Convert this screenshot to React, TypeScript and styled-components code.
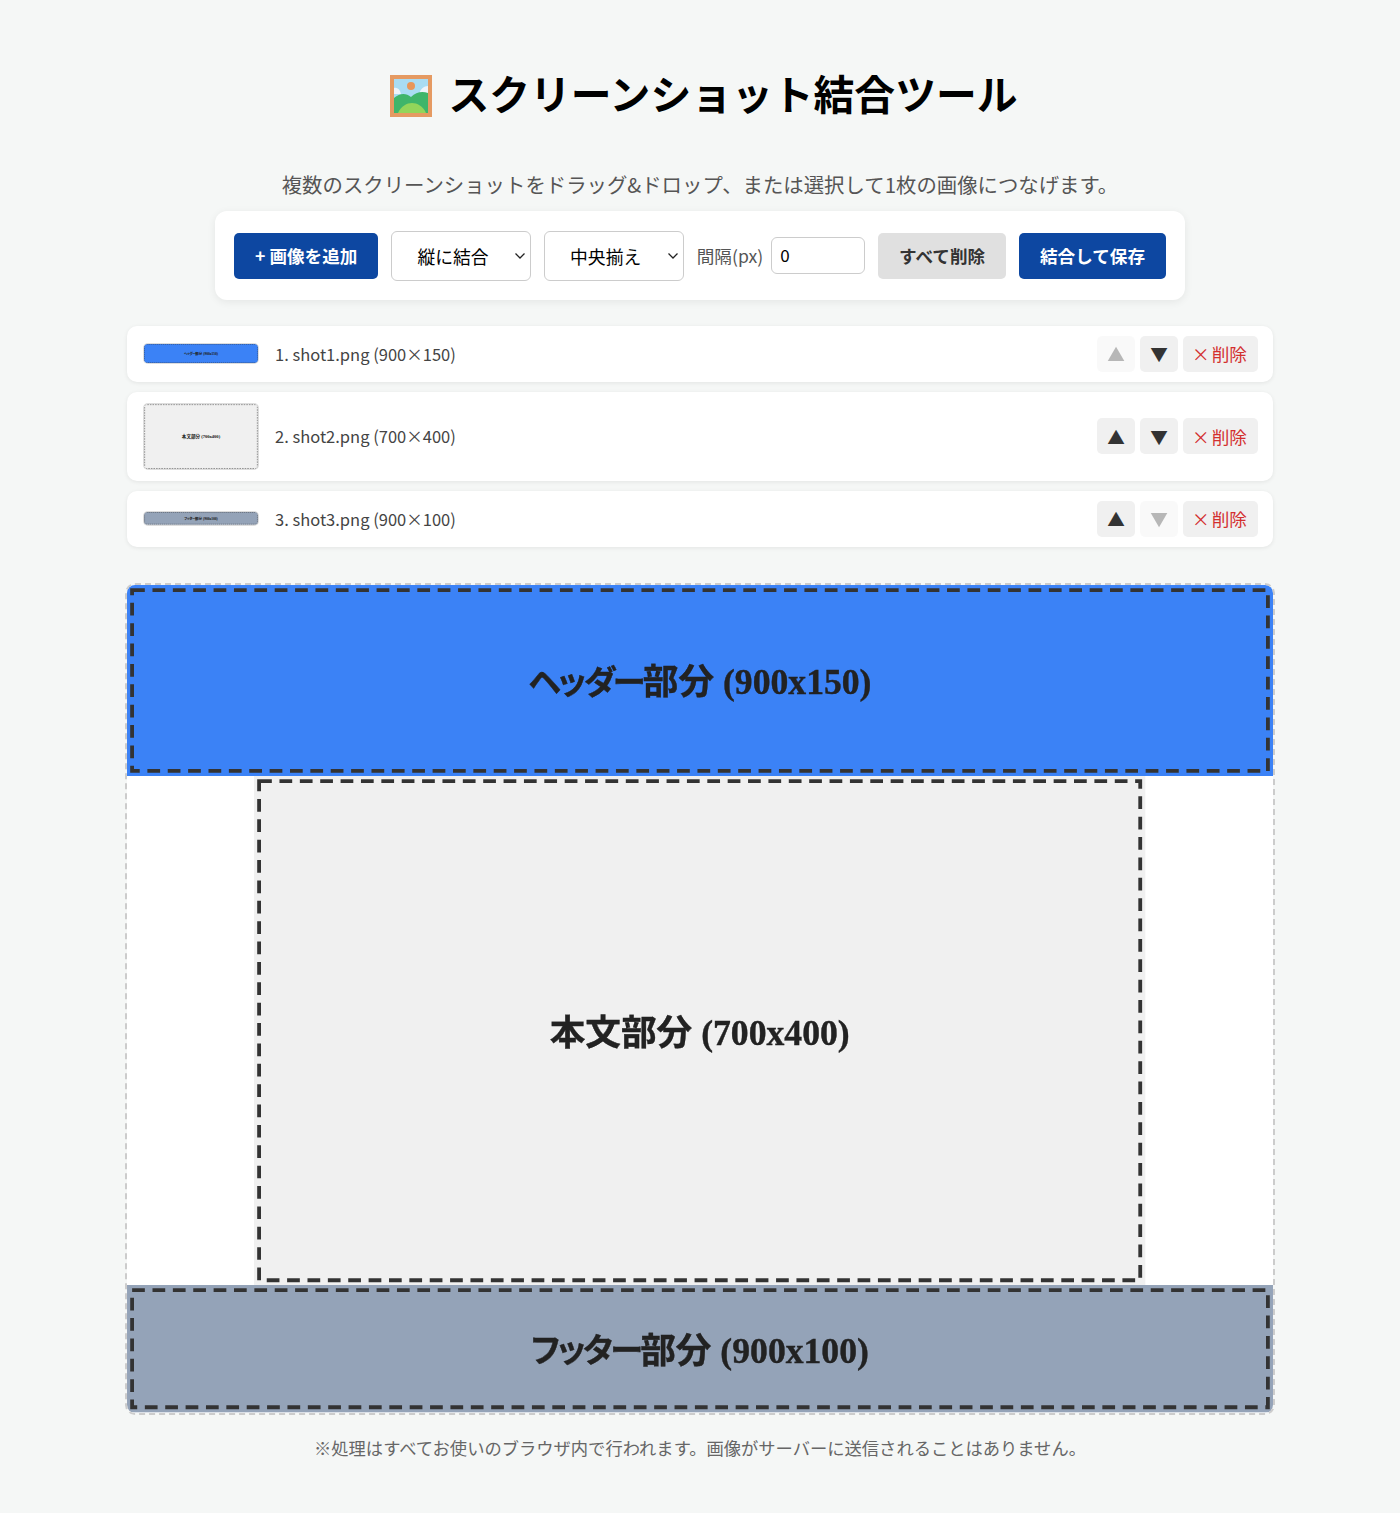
import React from 'react';
import styled, { createGlobalStyle } from 'styled-components';

const GlobalStyle = createGlobalStyle`
    body {
        margin: 0;
        background: #f5f7f6;
        font-family: 'Noto Sans CJK JP', 'Noto Sans', sans-serif;
        color: #333;
    }
`;

const Page = styled.div`
    width: 1146px;
    margin: 0 auto;
    padding-top: 64px;
    display: flex;
    flex-direction: column;
    align-items: center;
`;

const Title = styled.h1`
    margin: 0;
    height: 58px;
    display: flex;
    align-items: center;
    gap: 16px;
    font-size: 40.8px;
    font-weight: 700;
    line-height: 58px;
    color: #000;
    padding-left: 8px;
`;

const EmojiSvg = styled.svg`
    margin-top: 6px;
`;

const Subtitle = styled.p`
    margin: 47px 0 0;
    font-size: 20.4px;
    line-height: 30px;
    color: #555;
`;

const Toolbar = styled.div`
    margin-top: 12px;
    width: 970px;
    height: 89px;
    box-sizing: border-box;
    padding: 0 19px;
    display: flex;
    align-items: center;
    gap: 13px;
    background: #fff;
    border-radius: 12px;
    box-shadow: 0 2px 8px rgba(0, 0, 0, 0.07);
`;

const ToolButton = styled.button<{ $primary?: boolean; $width: number }>`
    width: ${(p) => p.$width}px;
    height: 46px;
    padding: 0;
    border: none;
    border-radius: 5px;
    font-family: inherit;
    font-size: 17.6px;
    font-weight: 700;
    background: ${(p) => (p.$primary ? '#0d47a1' : '#e0e0e0')};
    color: ${(p) => (p.$primary ? '#fff' : '#333')};
`;

const Select = styled.select`
    appearance: none;
    width: 139.75px;
    height: 50px;
    padding: 0 0 0 25px;
    border: 1px solid #ccc;
    border-radius: 6px;
    background: #fff url("data:image/svg+xml,%3Csvg xmlns='http://www.w3.org/2000/svg' width='12' height='8' viewBox='0 0 12 8'%3E%3Cpath d='M1.5 1.5 6 6l4.5-4.5' fill='none' stroke='%23222' stroke-width='1.3'/%3E%3C/svg%3E") no-repeat right 4px center;
    font-family: inherit;
    font-size: 17.8px;
    color: #000;
`;

const GapLabel = styled.label`
    display: flex;
    align-items: center;
    gap: 8px;
    font-size: 17.6px;
    color: #555;
    white-space: nowrap;
`;

const GapInput = styled.input`
    width: 94px;
    height: 37px;
    box-sizing: border-box;
    padding: 0 8px 2px;
    border: 1px solid #ccc;
    border-radius: 6px;
    font-family: inherit;
    font-size: 17px;
    color: #000;
`;

const FileList = styled.ul`
    list-style: none;
    margin: 25.6px 0 0;
    padding: 0;
    width: 100%;
    display: flex;
    flex-direction: column;
    gap: 10px;
`;

const FileRow = styled.li`
    display: flex;
    align-items: center;
    gap: 17px;
    min-height: 56px;
    box-sizing: border-box;
    padding: 10px 15px 10px 17px;
    background: #fff;
    border-radius: 10px;
    box-shadow: 0 1px 4px rgba(0, 0, 0, 0.08);
`;

const Thumb = styled.div`
    flex: none;
    width: 114px;
    margin: 2px 0;
    display: flex;
    justify-content: center;
    border-radius: 4px;
    overflow: hidden;
    box-shadow: 0 0 0 1px #ddd;
`;

const FileName = styled.span`
    flex: 1;
    font-size: 16.5px;
    color: #444;
`;

const Actions = styled.div`
    display: flex;
    gap: 5px;
`;

const ArrowButton = styled.button`
    width: 38px;
    height: 36px;
    padding: 0;
    border: none;
    border-radius: 5px;
    background: #f0f0f0;
    font-family: inherit;
    font-size: 17.6px;
    color: #333;
    &:disabled {
        opacity: 0.35;
        background: #f0f0f0;
        color: #333;
    }
`;

const DeleteButton = styled(ArrowButton)`
    width: 75px;
    padding-right: 2px;
    color: #d32f2f;
`;

const DeleteMark = styled.span`
    margin-right: 2px;
`;

const Preview = styled.div`
    margin-top: 38.4px;
    width: 100%;
    display: flex;
    flex-direction: column;
    align-items: center;
    background: #fff;
    border-radius: 8px;
    overflow: hidden;
    outline: 2px dashed #ccc;
    filter: blur(0.4px);
`;

const ShotSvg = styled.svg`
    display: block;
    width: ${(p) => p.width};
`;

const ShotLabel = styled.text`
    font: 700 28px 'Liberation Serif', 'Noto Sans CJK JP', serif;
    font-feature-settings: 'palt';
    fill: #222;
    stroke: #222;
    stroke-width: 0.3px;
    text-anchor: middle;
    dominant-baseline: middle;
`;

const Note = styled.p`
    margin: 23px 0 0;
    font-size: 17.3px;
    line-height: 24px;
    color: #666;
    padding-bottom: 52px;
`;

type Shot = { name: string; kana: string; kanji: string; w: number; h: number; fill: string };

const shots: Shot[] = [
    { name: 'shot1.png', kana: 'ヘッダー', kanji: '部分', w: 900, h: 150, fill: '#3b82f6' },
    { name: 'shot2.png', kana: '', kanji: '本文部分', w: 700, h: 400, fill: '#f0f0f0' },
    { name: 'shot3.png', kana: 'フッター', kanji: '部分', w: 900, h: 100, fill: '#94a3b8' },
];

// the pictures that were dropped in, so they are drawn rather than laid out
function ShotImage({ shot, width }: { shot: Shot; width: string }) {
    const { w, h, fill, kana, kanji } = shot;
    return (
        <ShotSvg viewBox={`0 0 ${w} ${h}`} width={width}>
            <rect width={w} height={h} fill={fill} />
            <rect x={4} y={4} width={w - 8} height={h - 8} fill="none" stroke="#333" strokeWidth={3} strokeDasharray="10 6" />
            <ShotLabel x={w / 2} y={h / 2 + 4.5}>
                <tspan fontSize={26} letterSpacing={-2}>
                    {kana}
                </tspan>
                {kanji} ({w}x{h})
            </ShotLabel>
        </ShotSvg>
    );
}

function PictureEmoji() {
    return (
        <EmojiSvg width="42" height="42" viewBox="0 0 42 42">
            <rect width="42" height="42" fill="#e59a62" />
            <rect x="4" y="4" width="34" height="34" fill="#a9dcf3" />
            <circle cx="21" cy="11" r="4" fill="#e8965a" />
            <path d="M4 13c3-1 6 1 7 6H4zM38 11c-4 0-8 3-9 9h9z" fill="#eef3fa" />
            <path d="M4 23c6-5 12-5 17-1 5-5 11-6 17-4v20H4z" fill="#3fb56a" />
            <path d="M8 38c3-7 9-10 14-10s11 3 14 10z" fill="#93d55a" />
        </EmojiSvg>
    );
}

function App() {
    return (
        <Page>
            <GlobalStyle />
            <Title>
                <PictureEmoji />
                スクリーンショット結合ツール
            </Title>
            <Subtitle>複数のスクリーンショットをドラッグ&ドロップ、または選択して1枚の画像につなげます。</Subtitle>
            <Toolbar>
                <ToolButton $primary $width={144.5}>
                    + 画像を追加
                </ToolButton>
                <Select defaultValue="v">
                    <option value="v">縦に結合</option>
                </Select>
                <Select defaultValue="c">
                    <option value="c">中央揃え</option>
                </Select>
                <GapLabel>
                    間隔(px)
                    <GapInput type="number" defaultValue={0} />
                </GapLabel>
                <ToolButton $width={128}>すべて削除</ToolButton>
                <ToolButton $primary $width={147}>
                    結合して保存
                </ToolButton>
            </Toolbar>
            <FileList>
                {shots.map((shot, i) => (
                    <FileRow key={shot.name}>
                        <Thumb>
                            <ShotImage shot={shot} width="100%" />
                        </Thumb>
                        <FileName>
                            {i + 1}. {shot.name} ({shot.w}×{shot.h})
                        </FileName>
                        <Actions>
                            <ArrowButton disabled={i === 0}>▲</ArrowButton>
                            <ArrowButton disabled={i === shots.length - 1}>▼</ArrowButton>
                            <DeleteButton>
                                <DeleteMark>×</DeleteMark>削除
                            </DeleteButton>
                        </Actions>
                    </FileRow>
                ))}
            </FileList>
            <Preview>
                {shots.map((shot) => (
                    <ShotImage key={shot.name} shot={shot} width={`${(shot.w / 900) * 100}%`} />
                ))}
            </Preview>
            <Note>※処理はすべてお使いのブラウザ内で行われます。画像がサーバーに送信されることはありません。</Note>
        </Page>
    );
}

export default App;
